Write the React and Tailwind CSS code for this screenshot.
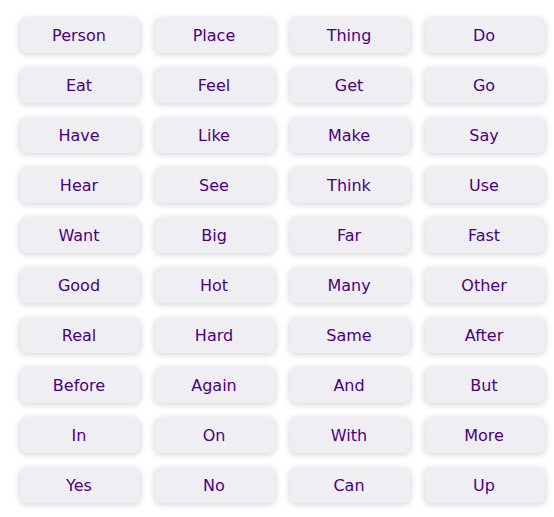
const words = [
  "Person","Place","Thing","Do",
  "Eat","Feel","Get","Go",
  "Have","Like","Make","Say",
  "Hear","See","Think","Use",
  "Want","Big","Far","Fast",
  "Good","Hot","Many","Other",
  "Real","Hard","Same","After",
  "Before","Again","And","But",
  "In","On","With","More",
  "Yes","No","Can","Up",
];

export default function App() {
  return (
    <div className="w-[554px] h-[517px] bg-white pt-[18px] pl-[20px]" style={{ fontFamily: '"DejaVu Sans", sans-serif' }}>
      <div className="grid grid-cols-[repeat(4,120px)] gap-x-[15px] gap-y-[15px]">
        {words.map((w) => (
          <button
            key={w}
            className="h-[35px] w-[120px] rounded-[6px] bg-[#efeef3] text-[#4b0082] text-[16px] flex items-center justify-center pr-[2px] shadow-[0_1px_7px_rgba(0,0,0,0.2)]"
          >
            {w}
          </button>
        ))}
      </div>
    </div>
  );
}
